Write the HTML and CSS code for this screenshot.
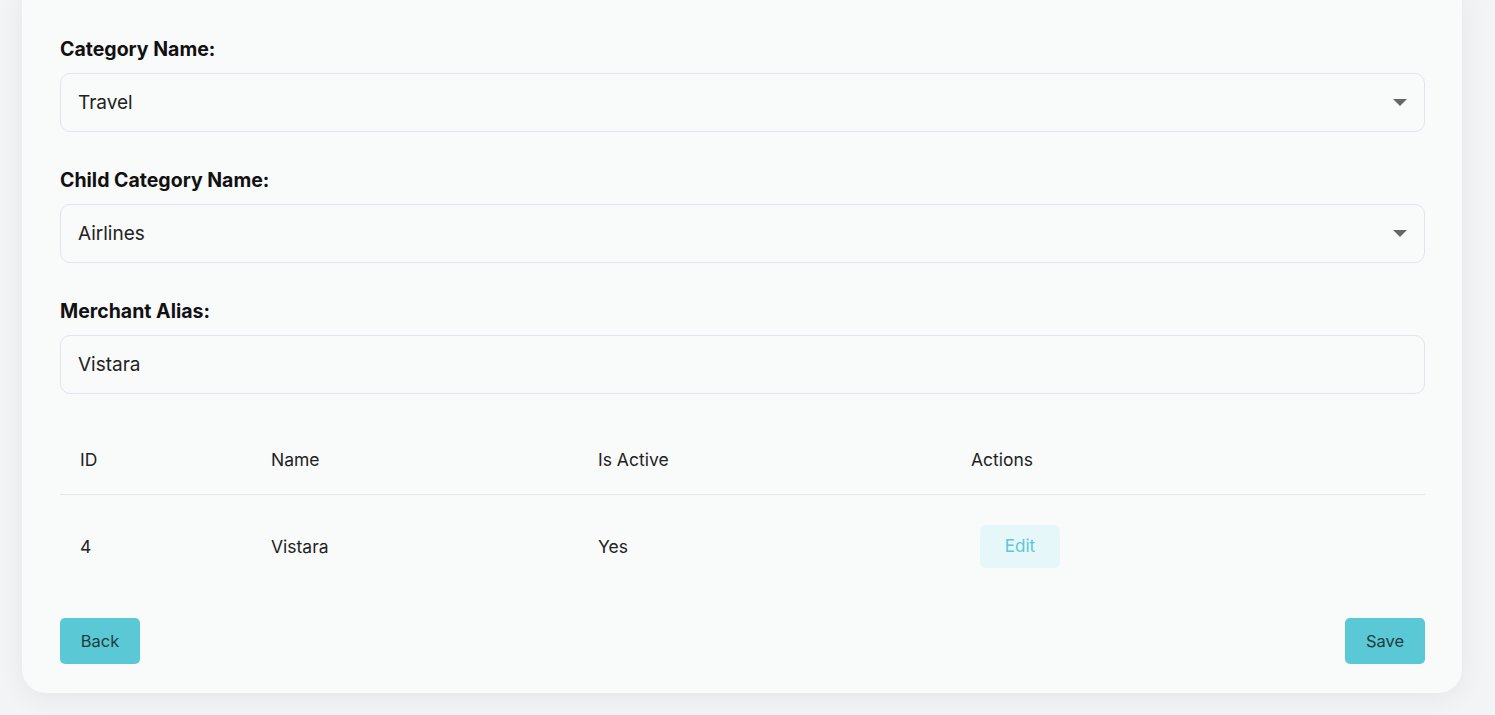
FILE: index.html
```html
<!DOCTYPE html>
<html lang="en">
<head>
<meta charset="utf-8">
<title>Merchant Alias</title>
<link rel="stylesheet" href="styles.css">
</head>
<body>
<div class="page">
  <form class="card">
    <div class="fields">
      <div class="field">
        <label class="label">Category Name:</label>
        <div class="control select">
          <span class="value">Travel</span>
          <span class="caret"></span>
        </div>
      </div>
      <div class="field">
        <label class="label">Child Category Name:</label>
        <div class="control select">
          <span class="value">Airlines</span>
          <span class="caret"></span>
        </div>
      </div>
      <div class="field">
        <label class="label">Merchant Alias:</label>
        <div class="control">
          <span class="value">Vistara</span>
        </div>
      </div>
    </div>

    <div class="table">
      <div class="row head">
        <div class="cell">ID</div>
        <div class="cell">Name</div>
        <div class="cell">Is Active</div>
        <div class="cell">Actions</div>
      </div>
      <div class="row body">
        <div class="cell">4</div>
        <div class="cell">Vistara</div>
        <div class="cell">Yes</div>
        <div class="cell"><button type="button" class="btn-edit">Edit</button></div>
      </div>
    </div>

    <div class="actions">
      <button type="button" class="btn">Back</button>
      <button type="button" class="btn">Save</button>
    </div>
  </form>
</div>
</body>
</html>
```

FILE: styles.css
```css
* { box-sizing: border-box; }
html, body { margin: 0; padding: 0; }
body {
  background: #f3f4f5;
  font-family: "Inter", "Noto Sans", sans-serif;
  color: #1d1d1f;
  height: 715px;
  overflow: hidden;
}
.page {
  padding: 0 33px 0 22px;
}
.card {
  margin-top: -24px;
  background: #f9fafa;
  border-radius: 24px;
  padding: 61px 37px 29px 38px;
  box-shadow: 0 6px 28px rgba(0, 0, 0, 0.06);
  display: flex;
  flex-direction: column;
}
.fields {
  display: flex;
  flex-direction: column;
  gap: 36px;
}
.field {
  display: flex;
  flex-direction: column;
  gap: 12px;
}
.label {
  font-size: 19.5px;
  font-weight: 700;
  line-height: 24px;
  color: #111;
}
.control {
  height: 59px;
  border: 1px solid #e3e3ee;
  border-radius: 10px;
  background: #f9fafa;
  display: flex;
  align-items: center;
  justify-content: space-between;
  padding: 0 17px;
  font-size: 19px;
  color: #222;
}
.caret {
  width: 0;
  height: 0;
  border-left: 7px solid transparent;
  border-right: 7px solid transparent;
  border-top: 7px solid #666;
}
.table {
  margin-top: 30px;
  font-size: 17.5px;
  color: #222;
}
.row {
  display: grid;
  grid-template-columns: 191px 327px 373px 1fr;
  align-items: center;
}
.row.head {
  height: 71px;
  border-bottom: 1px solid #e4e6e9;
}
.row.body {
  height: 102px;
}
.cell {
  padding-left: 20px;
}
.btn-edit {
  margin-left: 9px;
  width: 80px;
  height: 43px;
  border: 0;
  border-radius: 6px;
  background: #e6f7f9;
  color: #5cc8d6;
  font-family: inherit;
  font-size: 17px;
}
.actions {
  margin-top: 21px;
  display: flex;
  justify-content: space-between;
}
.btn {
  width: 80px;
  height: 46px;
  border: 0;
  border-radius: 5px;
  background: #5bc8d5;
  color: #1e3c42;
  font-family: inherit;
  font-size: 16.5px;
}
```
